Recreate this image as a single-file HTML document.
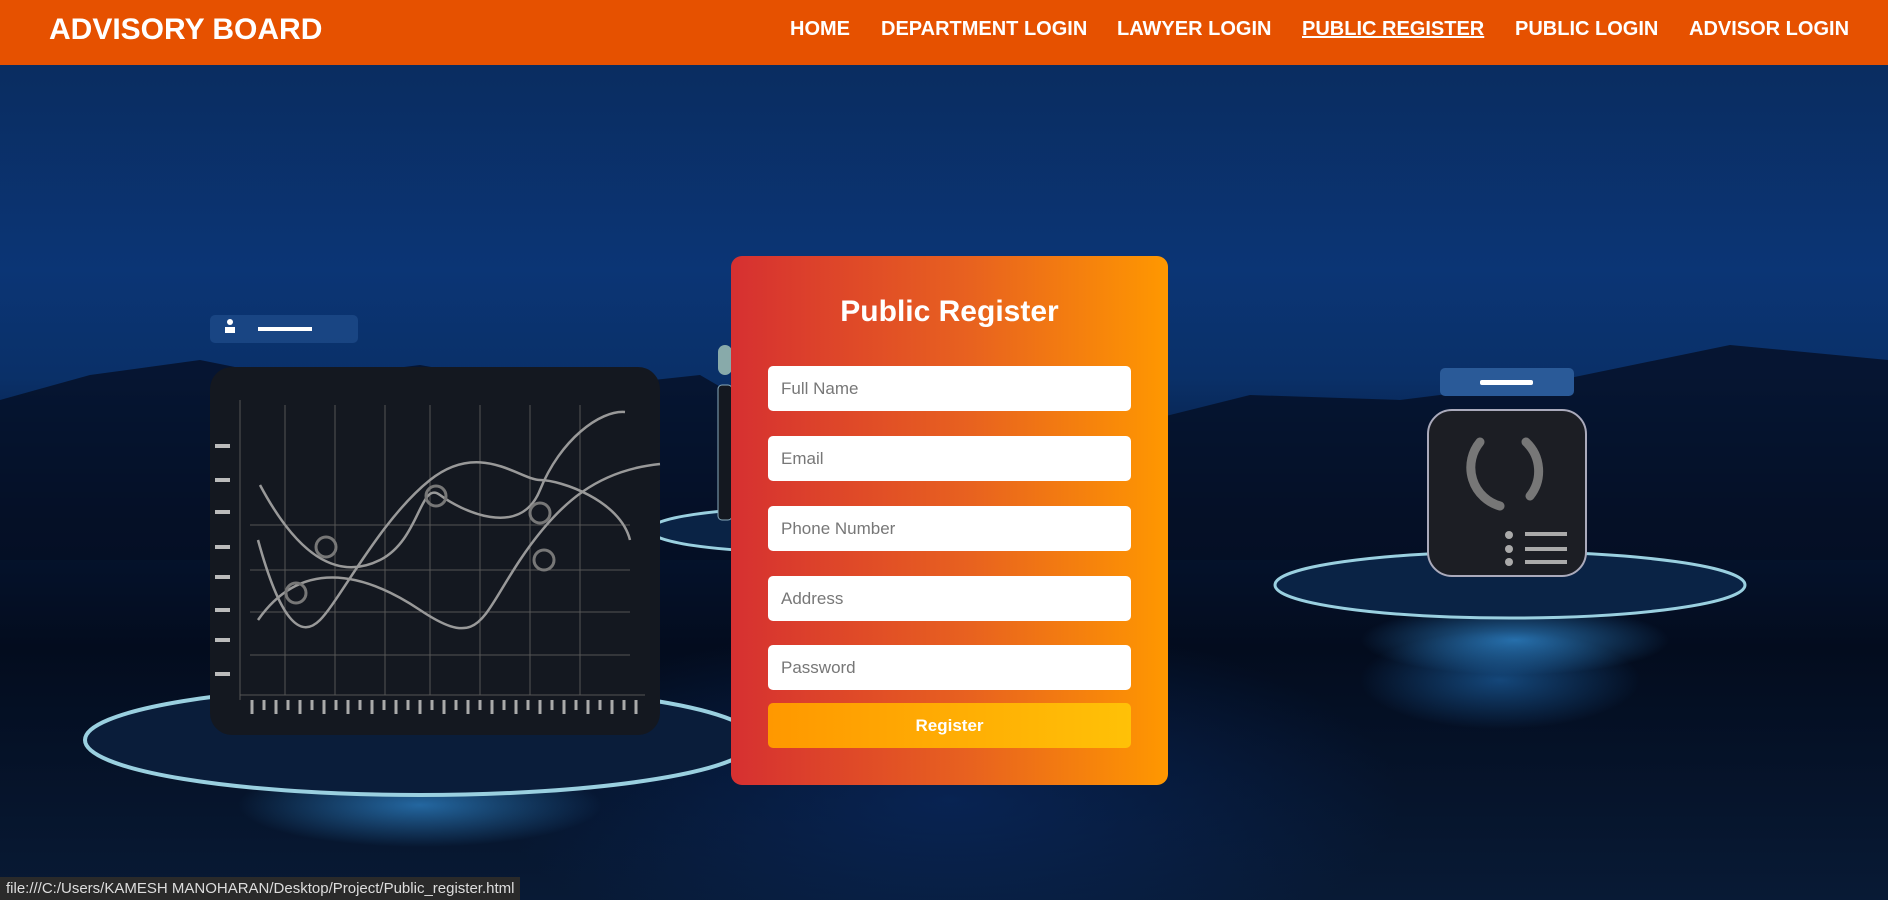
<!DOCTYPE html>
<html><head><meta charset="utf-8"><style>
*{margin:0;padding:0;box-sizing:border-box}
html,body{width:1888px;height:900px;overflow:hidden}
body{font-family:"Liberation Sans",Arial,sans-serif;position:relative;
background:
radial-gradient(ellipse 220px 50px at 1515px 640px,rgba(60,170,255,.6),transparent 70%),
radial-gradient(ellipse 200px 70px at 1500px 680px,rgba(40,140,230,.45),transparent 70%),
radial-gradient(ellipse 260px 60px at 420px 805px,rgba(60,170,255,.55),transparent 70%),
radial-gradient(ellipse 600px 240px at 950px 800px,rgba(10,50,120,.5),transparent 75%),
linear-gradient(180deg,#0a2a5a 0%,#0b3575 30%,#0a3068 42%,#051430 58%,#030c1e 72%,#081a35 100%);}
.hdr{position:absolute;left:0;top:0;width:1888px;height:65px;background:#e65100}
.logo{position:absolute;left:49px;top:13px;color:#fff;font-weight:bold;font-size:30px}
.nav{position:absolute;top:18px;color:#fff;font-weight:bold;font-size:20px}
.card{position:absolute;left:731px;top:256px;width:437px;height:529px;border-radius:11px;
background:linear-gradient(90deg,#d63031 0%,#e8621f 55%,#ff9800 100%)}
.card h2{position:absolute;top:39px;width:100%;text-align:center;color:#fff;font-size:30px;font-weight:bold}
.in{position:absolute;left:37px;width:363px;height:45px;background:#fff;border-radius:5px;color:#777;font-size:17px;padding:13px 0 0 13px}
.btn{position:absolute;left:37px;top:447px;width:363px;height:45px;border-radius:5px;background:linear-gradient(90deg,#ff9800,#ffc107);color:#fff;font-weight:bold;font-size:17px;text-align:center;line-height:45px}
.status{position:absolute;left:0;top:877px;height:23px;padding:3px 6px;background:#2a2a2a;color:#ddd;font-size:15px}
</style></head><body>
<svg width="1888" height="900" style="position:absolute;left:0;top:0">
<path d="M0 400 L90 375 L200 360 L300 380 L420 365 L560 390 L700 375 L760 410 L1000 405 L1150 420 L1250 395 L1400 400 L1560 380 L1730 345 L1888 360 L1888 560 L0 560Z" fill="#050f24" opacity=".8"/>
<ellipse cx="420" cy="740" rx="335" ry="55" fill="#0a1d3a" stroke="#9ad0e0" stroke-width="4"/>
<ellipse cx="1510" cy="585" rx="235" ry="33" fill="#0a2345" stroke="#9ad0e0" stroke-width="3"/>
<ellipse cx="800" cy="530" rx="150" ry="22" fill="#0a2345" stroke="#9ad0e0" stroke-width="3"/>
<rect x="210" y="315" width="148" height="28" rx="5" fill="#1d4a88" opacity=".8"/>
<circle cx="230" cy="322" r="3" fill="#fff"/><rect x="225" y="327" width="10" height="6" fill="#fff"/>
<rect x="258" y="327" width="54" height="4" fill="#fff"/>
<rect x="210" y="367" width="450" height="368" rx="22" fill="#141820"/>
<g stroke="#555" stroke-width="1"><line x1="240" y1="400" x2="240" y2="700"/><line x1="285" y1="405" x2="285" y2="695"/><line x1="335" y1="405" x2="335" y2="695"/><line x1="385" y1="405" x2="385" y2="695"/><line x1="430" y1="405" x2="430" y2="695"/><line x1="480" y1="405" x2="480" y2="695"/><line x1="530" y1="405" x2="530" y2="695"/><line x1="580" y1="405" x2="580" y2="695"/>
<line x1="250" y1="525" x2="630" y2="525"/><line x1="250" y1="570" x2="630" y2="570"/><line x1="250" y1="612" x2="630" y2="612"/><line x1="250" y1="655" x2="630" y2="655"/><line x1="240" y1="695" x2="645" y2="695"/></g>
<g fill="none" stroke="#999" stroke-width="2.5"><path d="M260 485 C300 560 340 580 380 560 S420 480 440 495 S520 540 540 490 S600 410 625 412"/><path d="M258 620 C300 560 360 570 420 610 S480 620 520 560 S600 470 660 464"/><path d="M258 540 C280 620 300 640 320 620 S380 520 430 480 S520 480 540 480 S620 500 630 540"/></g>
<g fill="none" stroke="#777" stroke-width="3"><circle cx="326" cy="547" r="10"/><circle cx="436" cy="496" r="10"/><circle cx="540" cy="513" r="10"/><circle cx="544" cy="560" r="10"/><circle cx="296" cy="593" r="10"/></g>
<g fill="#bbb"><rect x="215" y="444" width="15" height="4"/><rect x="215" y="478" width="15" height="4"/><rect x="215" y="510" width="15" height="4"/><rect x="215" y="545" width="15" height="4"/><rect x="215" y="575" width="15" height="4"/><rect x="215" y="608" width="15" height="4"/><rect x="215" y="638" width="15" height="4"/><rect x="215" y="672" width="15" height="4"/></g>
<g stroke="#aaa" stroke-width="3"><path d="M252 700v14M264 700v10M276 700v14M288 700v10M300 700v14M312 700v10M324 700v14M336 700v10M348 700v14M360 700v10M372 700v14M384 700v10M396 700v14M408 700v10M420 700v14M432 700v10M444 700v14M456 700v10M468 700v14M480 700v10M492 700v14M504 700v10M516 700v14M528 700v10M540 700v14M552 700v10M564 700v14M576 700v10M588 700v14M600 700v10M612 700v14M624 700v10M636 700v14"/></g>
<rect x="718" y="345" width="14" height="30" rx="7" fill="#8aa"/>
<rect x="718" y="385" width="14" height="135" rx="4" fill="#141820" stroke="#8ab" stroke-width="1"/>
<rect x="1440" y="368" width="134" height="28" rx="5" fill="#2a5a98"/>
<rect x="1480" y="380" width="53" height="5" rx="2" fill="#fff"/>
<rect x="1428" y="410" width="158" height="166" rx="24" fill="#1c1e24" stroke="#aab" stroke-width="2"/>
<path d="M1480 442 A40 40 0 0 0 1500 506" fill="none" stroke="#777" stroke-width="9" stroke-linecap="round"/>
<path d="M1526 442 A40 40 0 0 1 1530 496" fill="none" stroke="#777" stroke-width="9" stroke-linecap="round"/>
<g fill="#aaa"><circle cx="1509" cy="535" r="4"/><circle cx="1509" cy="549" r="4"/><circle cx="1509" cy="562" r="4"/><rect x="1525" y="532" width="42" height="4"/><rect x="1525" y="547" width="42" height="4"/><rect x="1525" y="560" width="42" height="4"/></g>
</svg>
<div class="hdr"></div>
<div class="logo">ADVISORY BOARD</div>
<div class="nav" style="left:790px">HOME</div>
<div class="nav" style="left:881px">DEPARTMENT LOGIN</div>
<div class="nav" style="left:1117px">LAWYER LOGIN</div>
<div class="nav" style="left:1302px;text-decoration:underline">PUBLIC REGISTER</div>
<div class="nav" style="left:1515px">PUBLIC LOGIN</div>
<div class="nav" style="left:1689px">ADVISOR LOGIN</div>
<div class="card"><h2>Public Register</h2>
<div class="in" style="top:110px">Full Name</div>
<div class="in" style="top:180px">Email</div>
<div class="in" style="top:250px">Phone Number</div>
<div class="in" style="top:320px">Address</div>
<div class="in" style="top:389px">Password</div>
<div class="btn">Register</div></div>
<div class="status">file:///C:/Users/KAMESH MANOHARAN/Desktop/Project/Public_register.html</div>
</body></html>
